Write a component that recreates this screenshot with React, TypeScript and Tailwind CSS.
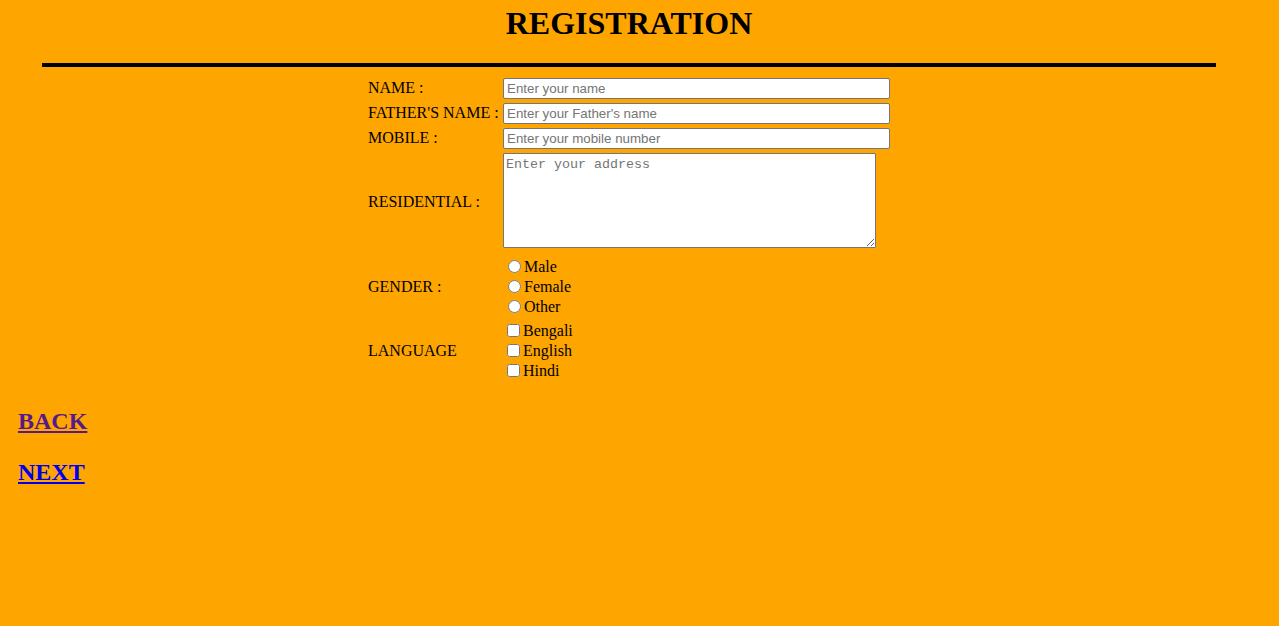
import React from "react"

const inputCls =
  "h-[21px] w-[387px] rounded-[2px] border border-[#767676] bg-white px-[3px] font-['Liberation_Sans',Arial,sans-serif] text-[13.33px] text-black placeholder:text-[#757575] outline-none"

export default function App() {
  return (
    <div className="min-h-screen w-full bg-[#FFA500] font-['Liberation_Serif','Times_New_Roman',serif] text-[16px] text-black">
      <div className="w-[1258px]">
        {/* Heading */}
        <h1 className="pt-[5px] text-center text-[32px] font-bold leading-[37px]">REGISTRATION</h1>
        <div className="ml-[42px] mt-[21px] h-[4px] w-[1174px] bg-black" />

        {/* Form */}
        <form className="ml-[368px] mt-[11px] grid grid-cols-[132px_auto] gap-x-[3px]">
          <label className="flex h-[21px] items-center pb-[1px]">NAME :</label>
          <input className={inputCls} placeholder="Enter your name" />

          <label className="mt-[4px] flex h-[21px] items-center whitespace-nowrap pb-[1px]">FATHER'S NAME :</label>
          <input className={"mt-[4px] " + inputCls} placeholder="Enter your Father's name" />

          <label className="mt-[4px] flex h-[21px] items-center pb-[1px]">MOBILE :</label>
          <input className={"mt-[4px] " + inputCls} placeholder="Enter your mobile number" />

          <label className="mt-[4px] flex h-[95px] items-center pt-[3px]">RESIDENTIAL :</label>
          <textarea
            className="mt-[4px] block h-[95px] w-[373px] resize rounded-[1px] border border-[#767676] bg-white px-[2px] pb-[2px] pt-[3px] font-['Liberation_Mono','Courier_New',monospace] text-[13.33px] leading-[16px] text-black placeholder:text-[#757575] outline-none"
            placeholder="Enter your address"
          />

          <label className="mt-[9px] flex h-[60px] items-center">GENDER :</label>
          <div className="mt-[9px] flex flex-col">
            {["Male", "Female", "Other"].map((g) => (
              <label key={g} className="flex h-[20px] items-center">
                <input type="radio" name="gender" className="mb-[1px] ml-[5px] mr-[3px] h-[13px] w-[13px]" />
                {g}
              </label>
            ))}
          </div>

          <label className="mt-[4px] flex h-[60px] items-center">LANGUAGE</label>
          <div className="mt-[4px] flex flex-col">
            {["Bengali", "English", "Hindi"].map((l) => (
              <label key={l} className="flex h-[20px] items-center">
                <input type="checkbox" className="mb-[1px] ml-[4px] mr-[3px] h-[13px] w-[13px]" />
                {l}
              </label>
            ))}
          </div>
        </form>

        {/* Links */}
        <div className="ml-[18px] mt-[26px] flex flex-col gap-[23px]">
          <a href="#" className="block h-[28px] text-[24px] font-bold leading-[28px] text-[#551A8B] underline">
            BACK
          </a>
          <a href="#" className="block h-[28px] text-[24px] font-bold leading-[28px] text-[#0000EE] underline">
            NEXT
          </a>
        </div>
      </div>
    </div>
  )
}
